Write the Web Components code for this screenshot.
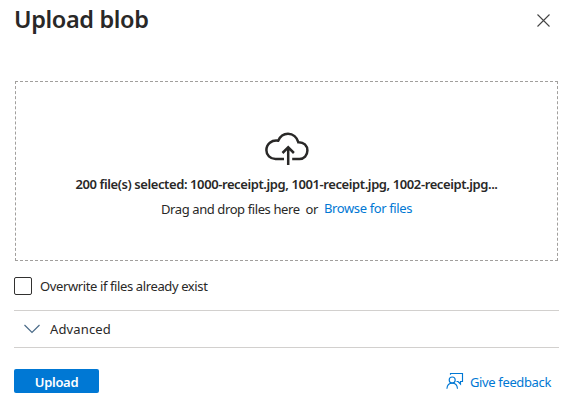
<!DOCTYPE html>
<html lang="en"><head><meta charset="utf-8"><title>Upload blob</title>
<style>html,body{margin:0;background:#fff}</style></head><body>
<upload-panel></upload-panel>
<script>
const define = (name, html) => customElements.define(name, class extends HTMLElement {
  constructor() {
    super();
    this.attachShadow({mode: 'open'}).innerHTML = html;
  }
});

// A single line of text whose tracking is tuned to the given advance width.
customElements.define('fit-text', class extends HTMLElement {
  connectedCallback() {
    if (this.shadowRoot) return;
    this.attachShadow({mode: 'open'}).innerHTML =
      '<style>:host{display:block;white-space:pre;flex:none}span{display:inline-block;white-space:pre}</style><span><slot></slot></span>';
    const span = this.shadowRoot.querySelector('span');
    const target = parseFloat(this.getAttribute('w'));
    const width = span.getBoundingClientRect().width;
    span.style.letterSpacing = (target - width) / this.textContent.length + 'px';
    this.style.width = target + 'px';
  }
});

define('panel-header', `<style>
:host{display:flex;justify-content:space-between;height:81px;padding:2px 23px 0 14px;box-sizing:border-box;font-size:23.5px;font-weight:600;line-height:34px}
svg{margin-top:12px}</style><slot></slot>
<svg width="13" height="13" viewBox="0 0 13 13" fill="none" stroke="#444" stroke-width="1.1"><path d="M.5.5l12 12M12.5.5l-12 12"/></svg>`);

define('drop-zone', `<style>
:host{display:flex;flex-direction:column;align-items:center;box-sizing:border-box;margin:0 15px;height:180px;border:1px dashed #a19f9d;padding-top:50px;width:543px}
svg{display:block}
.names{margin-top:8px;font-weight:600}
.hint{display:flex;margin-top:5px;gap:6px}
.link{color:#0078d4;margin-top:-1px}</style>
<svg width="44" height="34" viewBox="0 0 44 34" fill="none" stroke="#292827" stroke-width="2.5"><path d="M19 27H10.5C5.2 27 1.4 23.2 1.4 18.2C1.4 12 6.7 7.7 13.2 8.7C15.1 4.3 18.7 1.7 23 1.7C28 1.7 32 5.4 33.3 10.2C38.8 10 42.4 13.5 42.4 18.6C42.4 23.5 39 27 34.5 27H27.2M23.2 33V15.5M17.5 21l5.7-5.7 5.7 5.7"/></svg>
<div class="names"><slot name="names"></slot></div>
<div class="hint"><slot name="hint"></slot><div class="link"><slot name="link"></slot></div></div>`);

define('check-box', `<style>
:host{display:flex;gap:8px;padding:16px 0 0 14px;height:33px}
i{box-sizing:border-box;width:18px;height:18px;border:1px solid #323130;border-radius:2px}
slot{display:block}::slotted(*){margin-top:-1px}</style><i></i><slot></slot>`);

define('accordion-row', `<style>
:host{display:flex;box-sizing:border-box;height:38px;margin:0 14px;border:solid #d2d0ce;border-width:1px 0;padding:8px 0 0 10px;gap:10px}
svg{margin-top:5px}</style>
<svg width="16" height="10" viewBox="0 0 16 10" fill="none" stroke="#4a6b88" stroke-width="1.2"><path d="M.5 1L8 8.5 15.5 1"/></svg><slot></slot>`);

define('primary-button', `<style>
:host{display:flex;justify-content:center;box-sizing:border-box;width:85px;height:24px;padding-top:3px;background:#0078d4;color:#fff;border-radius:2px;font-weight:600}</style><slot></slot>`);

define('feedback-link', `<style>
:host{display:flex;gap:6px;color:#0078d4;padding-top:3px}</style>
<svg width="18" height="17" viewBox="0 0 18 17" fill="none" stroke="#0078d4" stroke-width="1.15"><path d="M4.5 2.8V1.5H16.5V9.5H14.5V12L12 9.5H10.5"/><circle cx="6.2" cy="8" r="3"/><path d="M.9 16.7C1.2 12.9 3.1 11.1 6.2 11.1S11.2 12.9 11.5 16.7"/></svg><slot></slot>`);

define('panel-footer', `<style>:host{display:flex;justify-content:space-between;padding:21px 22px 0 14px}</style><slot></slot>`);

define('upload-panel', `<style>
:host{display:block;width:573px;height:418px;overflow:hidden;background:#fff;color:#292827;font:13px/20px "Noto Sans","Open Sans",sans-serif}
</style>
<panel-header><fit-text w="134.5">Upload blob</fit-text></panel-header>
<drop-zone>
<fit-text slot="names" w="422">200 file(s) selected: 1000-receipt.jpg, 1001-receipt.jpg, 1002-receipt.jpg...</fit-text>
<fit-text slot="hint" w="157">Drag and drop files here  or</fit-text>
<fit-text slot="link" w="88">Browse for files</fit-text>
</drop-zone>
<check-box><fit-text w="167.5">Overwrite if files already exist</fit-text></check-box>
<accordion-row><fit-text w="61">Advanced</fit-text></accordion-row>
<panel-footer><primary-button><fit-text w="43.5">Upload</fit-text></primary-button>
<feedback-link><fit-text w="81">Give feedback</fit-text></feedback-link></panel-footer>`);
</script></body></html>
